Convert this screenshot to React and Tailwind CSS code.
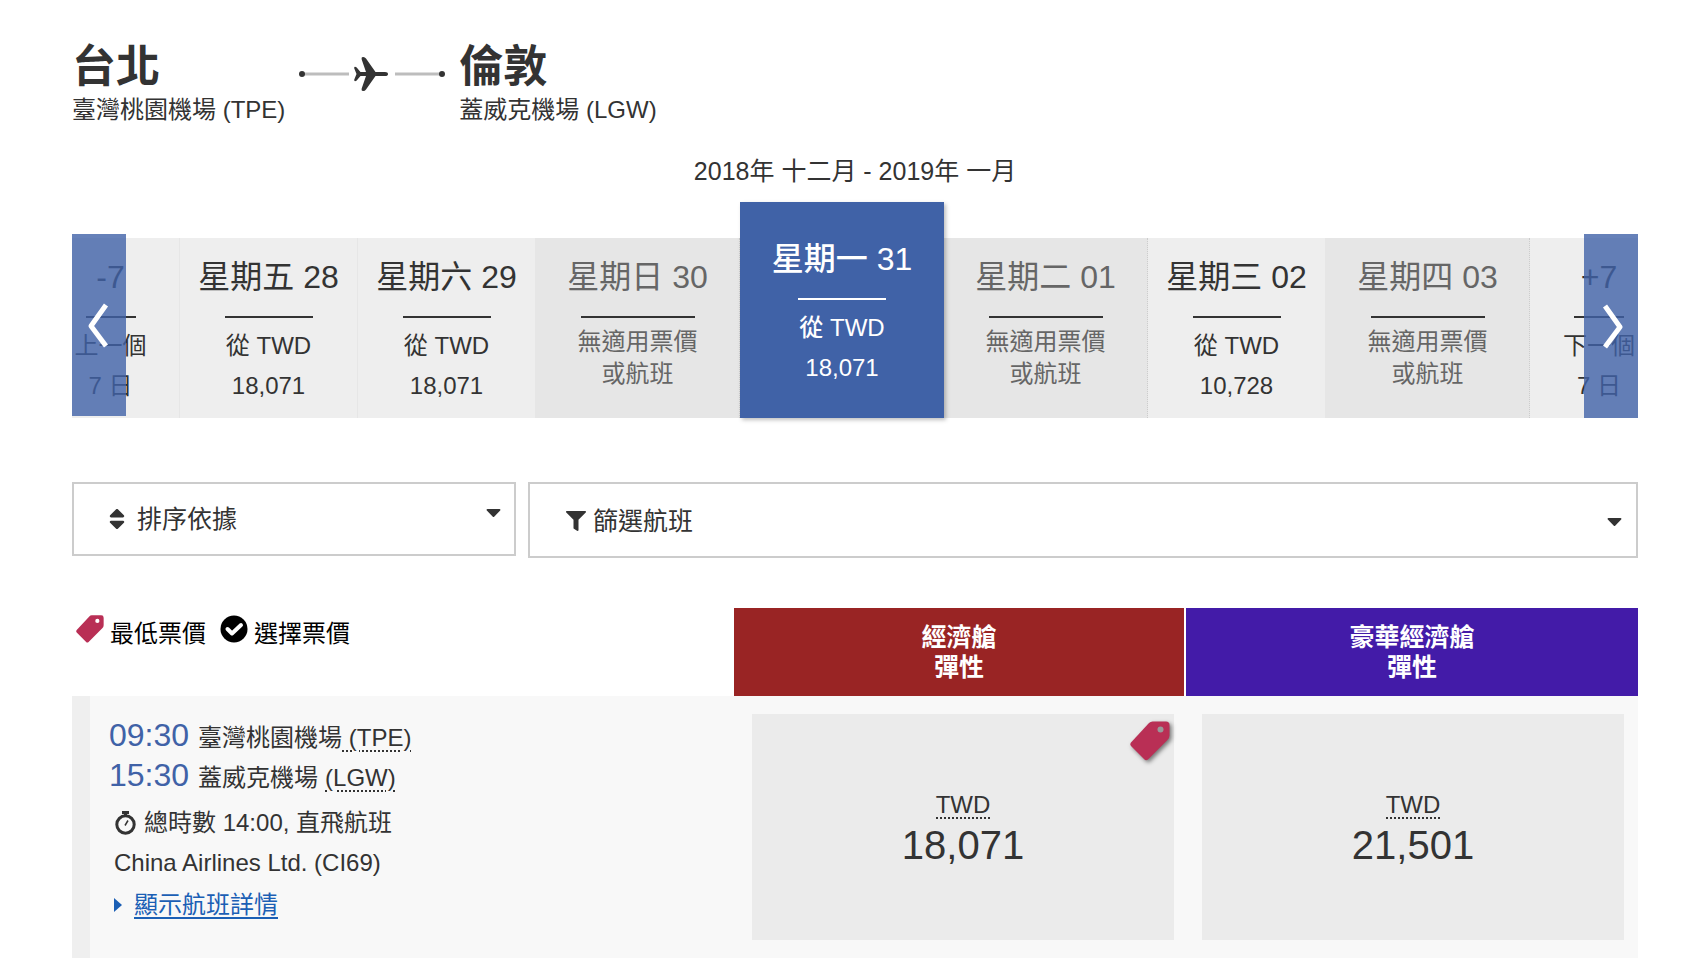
import React, { useState } from 'react';
import { FaFilter, FaSort, FaCaretDown } from 'react-icons/fa';

const days = [
    { day: '星期五 28', price: '18,071' },
    { day: '星期六 29', price: '18,071' },
    { day: '星期日 30' },
    { day: '星期一 31', price: '18,071' },
    { day: '星期二 01' },
    { day: '星期三 02', price: '10,728' },
    { day: '星期四 03' },
];

const fares = [
    { id: 'economy', currency: 'TWD', price: '18,071', lowest: true },
    { id: 'premium', currency: 'TWD', price: '21,501', lowest: false },
];

function City({ name, airport }) {
    return (
        <div>
            <h2 className="text-[44px] leading-[54px] font-bold">{name}</h2>
            <p className="text-[24px] leading-[32px]">{airport}</p>
        </div>
    );
}

function RouteLine() {
    return (
        <svg className="w-[150px] h-[40px] mt-[14px] mx-3" viewBox="0 0 150 40" aria-hidden="true">
            <path d="M5 20H52M98 20H145" stroke="#bdbdbd" strokeWidth="3" />
            <circle cx="5" cy="20" r="3" fill="#333" />
            <circle cx="145" cy="20" r="3" fill="#333" />
            <path
                d="M91 20q0-2-3-2H78.500L69 4.500q-1.200-1.800-3.300-1.500-1.700.4-1 2.500L69 18h-5.500l-3.800-4.600q-2.700-1.400-2.500.8L59.500 20l-2.300 5.800q-.2 2.200 2.500.8L63.500 22H69l-4.300 12.500q-.7 2.100 1 2.500 2.100.3 3.300-1.500L78.500 22H88q3 0 3-2z"
                fill="#333"
            />
        </svg>
    );
}

function TagIcon({ className, hole }) {
    return (
        <svg className={className} viewBox="0 0 40 40" aria-hidden="true">
            <path
                d="M22.500.5H36q3.500 0 3.500 3.500v10.500q0 2.500-2 4.500L18 38.500q-2 1.500-3.500 0L1 25q-1.500-1.700 0-3.500L19 2q1.500-1.500 3.500-1.500z"
                fill="#b92f55"
            />
            <circle cx="30.500" cy="8.500" r="3" fill={hole} />
        </svg>
    );
}

function CheckIcon() {
    return (
        <svg className="w-7 h-7 ml-[14px]" viewBox="0 0 28 28" fill="none" aria-hidden="true">
            <circle cx="14" cy="14" r="13.500" fill="#000" />
            <path d="M7.500 14l4.500 4.500 9-8.500" stroke="#fff" strokeWidth="4" strokeLinecap="round" strokeLinejoin="round" />
        </svg>
    );
}

function StopwatchIcon() {
    return (
        <svg className="w-6 h-6 shrink-0" viewBox="0 0 24 24" fill="none" stroke="#333" aria-hidden="true">
            <circle cx="11.500" cy="13.500" r="8.700" strokeWidth="3" />
            <path d="M8 1.500h7" strokeWidth="3" />
            <path d="M11.500 2v4" strokeWidth="3" />
            <path d="M11 14.500l3-5" strokeWidth="1.500" />
        </svg>
    );
}

function DayCell({ day, price, selected, onSelect }) {
    if (!price) {
        return (
            <button type="button" disabled className="h-[180px] bg-[#e6e6e6] text-[#666] border-r border-dotted border-[#ccc] flex flex-col items-center pt-[19px]">
                <span className="text-[32px] leading-[40px]">{day}</span>
                <span className="w-[114px] h-0.5 bg-[#333] mt-[19px] mb-2" />
                <span className="w-[120px] text-[24px] leading-[32px]">無適用票價或航班</span>
            </button>
        );
    }
    return (
        <button
            type="button"
            onClick={onSelect}
            aria-pressed={selected}
            className={
                selected
                    ? 'relative z-10 h-[216px] bg-[#4062a7] text-white font-medium shadow-[2px_2px_4px_rgba(0,0,0,0.25)] flex flex-col items-center pt-[37px]'
                    : 'h-[180px] bg-[#eee] text-[#333] border-r border-[#e6e6e6] flex flex-col items-center pt-[19px]'
            }
        >
            <span className="text-[32px] leading-[40px]">{day}</span>
            <span className={selected ? 'w-[88px] h-0.5 bg-white mt-[19px] mb-2' : 'w-[88px] h-0.5 bg-[#333] mt-[19px] mb-2'} />
            <span className="text-[24px] leading-[40px]">從 TWD</span>
            <span className="text-[24px] leading-[40px]">{price}</span>
        </button>
    );
}

function WeekCell({ label, line1, line2, side }) {
    return (
        <div className={side === 'left' ? 'h-[180px] bg-[#eee] pr-[30px] border-r border-[#e6e6e6]' : 'h-[180px] bg-[#eee] pl-[30px]'}>
            <div className="flex flex-col items-center pt-[19px]">
                <span className="text-[32px] leading-[40px]">{label}</span>
                <span className="w-[50px] h-0.5 bg-[#333] mt-[19px] mb-2" />
                <span className="text-[24px] leading-[40px] whitespace-nowrap">{line1}</span>
                <span className="text-[24px] leading-[40px]">{line2}</span>
            </div>
        </div>
    );
}

function FareCell({ fare }) {
    return (
        <button type="button" className="relative w-full h-[226px] bg-[#ebebeb] flex flex-col items-center justify-center pt-[10px]">
            <abbr className="text-[24px] leading-[24px] no-underline border-b-2 border-dotted border-[#333]">{fare.currency}</abbr>
            <span className="text-[40px] leading-[52px]">{fare.price}</span>
            {fare.lowest && (
                <TagIcon hole="#999" className="absolute top-[7px] right-1 w-10 h-10 drop-shadow-[2px_2px_2px_rgba(0,0,0,0.5)]" />
            )}
        </button>
    );
}

function App() {
    const [selectedDay, setSelectedDay] = useState(3);
    const [filterOpen, setFilterOpen] = useState(false);

    return (
        <main
            lang="zh-TW"
            className="bg-white text-[#333] pl-[72px] pr-[48px] pt-[40px] pb-[18px] font-['Liberation_Sans','Noto_Sans_CJK_TC',sans-serif]"
        >
            {/* Route */}
            <header className="flex items-start">
                <City name="台北" airport="臺灣桃園機場 (TPE)" />
                <RouteLine />
                <City name="倫敦" airport="蓋威克機場 (LGW)" />
            </header>

            {/* Date carousel */}
            <p className="mt-[29px] text-center text-[25px] leading-[32px]">2018年 十二月 - 2019年 一月</p>
            <section className="relative mt-[15px] grid grid-cols-[108fr_178fr_178fr_204fr_204fr_204fr_178fr_204fr_108fr] items-end">
                <WeekCell side="left" label="-7" line1="上一個" line2="7 日" />
                {days.map((d, i) => (
                    <DayCell
                        key={d.day}
                        day={d.day}
                        price={d.price}
                        selected={i === selectedDay}
                        onSelect={() => setSelectedDay(i)}
                    />
                ))}
                <WeekCell side="right" label="+7" line1="下一個" line2="7 日" />
                <button type="button" aria-label="上一個 7 日" className="absolute left-0 bottom-0.5 w-[54px] h-[182px] bg-[#4062a7]/80 flex items-center justify-center">
                    <svg className="w-6 h-12" viewBox="0 0 24 48" fill="none" stroke="#fff" strokeWidth="5">
                        <path d="M19 4L4 25l15 20" strokeLinejoin="round" />
                    </svg>
                </button>
                <button type="button" aria-label="下一個 7 日" className="absolute right-0 bottom-0 w-[54px] h-[184px] bg-[#4062a7]/80 flex items-center justify-center">
                    <svg className="w-6 h-12" viewBox="0 0 24 48" fill="none" stroke="#fff" strokeWidth="5">
                        <path d="M6 4l15 21L6 45" strokeLinejoin="round" />
                    </svg>
                </button>
            </section>

            {/* Sort and filter */}
            <div className="mt-[64px] grid grid-cols-[444fr_1110fr] gap-3 items-start text-[25px]">
                <label className="h-[74px] border-2 border-[#ccc] pl-[33px] pr-[13px] flex items-center">
                    <FaSort className="w-[20px] h-[26px] mr-[10px]" />
                    <select aria-label="排序依據" className="appearance-none flex-1 min-w-0 h-[40px] leading-[40px] bg-transparent">
                        <option>排序依據</option>
                    </select>
                    <FaCaretDown className="w-[15px] h-[24px] mb-[14px]" />
                </label>
                <button
                    type="button"
                    aria-expanded={filterOpen}
                    onClick={() => setFilterOpen(!filterOpen)}
                    className="h-[76px] border-2 border-[#ccc] pl-[36px] pr-[14px] pt-0.5 flex items-center text-left"
                >
                    <FaFilter className="w-[20px] h-[20px] mr-[7px]" />
                    <span className="flex-1 leading-[40px]">篩選航班</span>
                    <FaCaretDown className="w-[15px] h-[24px]" />
                </button>
            </div>

            {/* Fares */}
            <table className="mt-[50px] w-full table-fixed border-separate border-spacing-0">
                <thead>
                    <tr className="h-[88px]">
                        <td className="w-[662px] p-0 align-top">
                            <div className="flex items-start text-[24px] leading-[32px] text-black pt-[7px] pl-1">
                                <TagIcon hole="#fff" className="w-7 h-7" />
                                <span className="pt-[3px] ml-[6px]">最低票價</span>
                                <CheckIcon />
                                <span className="pt-[3px] ml-[6px]">選擇票價</span>
                            </div>
                        </td>
                        <th scope="col" className="w-[450px] p-0 bg-[#992424] text-white text-[25px] leading-[30px] font-bold">
                            經濟艙<br />彈性
                        </th>
                        <th scope="col" className="w-[454px] p-0 bg-[#431ba8] border-l-2 border-white text-white text-[25px] leading-[30px] font-bold">
                            豪華經濟艙<br />彈性
                        </th>
                    </tr>
                </thead>
                <tbody>
                    <tr className="bg-[#f8f8f8]">
                        <td className="p-0 align-top">
                            <div className="h-[262px] border-l-[18px] border-[#efefef] pl-[19px] pt-[19px] text-[24px] leading-[40px]">
                                <p className="flex items-baseline h-[40px]">
                                    <span className="text-[32px] text-[#4062a7] mr-[9px]">09:30</span>
                                    臺灣桃園機場
                                    <abbr className="whitespace-pre underline decoration-dotted decoration-2 underline-offset-4"> (TPE)</abbr>
                                </p>
                                <p className="flex items-baseline h-[40px]">
                                    <span className="text-[32px] text-[#4062a7] mr-[9px]">15:30</span>
                                    <span className="mr-[7px]">蓋威克機場</span>
                                    <abbr className="underline decoration-dotted decoration-2 underline-offset-4">(LGW)</abbr>
                                </p>
                                <div className="pl-[5px] mt-2">
                                    <p className="flex items-center gap-[6px] h-[40px]">
                                        <StopwatchIcon />
                                        總時數 14:00, 直飛航班
                                    </p>
                                    <p className="h-[40px]">China Airlines Ltd. (CI69)</p>
                                    <a href="#details" className="flex items-center mt-0.5 text-[#1b5fb5]">
                                        <svg className="w-2 h-[14px] mr-[12px]" viewBox="0 0 8 14" fill="currentColor" aria-hidden="true">
                                            <path d="M0 0l8 7-8 7z" />
                                        </svg>
                                        <span className="underline decoration-2 underline-offset-4">顯示航班詳情</span>
                                    </a>
                                </div>
                            </div>
                        </td>
                        {fares.map(fare => (
                            <td key={fare.id} className={fare.lowest ? 'pl-[18px] pr-[10px] py-[18px]' : 'pl-[18px] pr-[14px] py-[18px]'}>
                                <FareCell fare={fare} />
                            </td>
                        ))}
                    </tr>
                </tbody>
            </table>
        </main>
    );
}

export default App;
